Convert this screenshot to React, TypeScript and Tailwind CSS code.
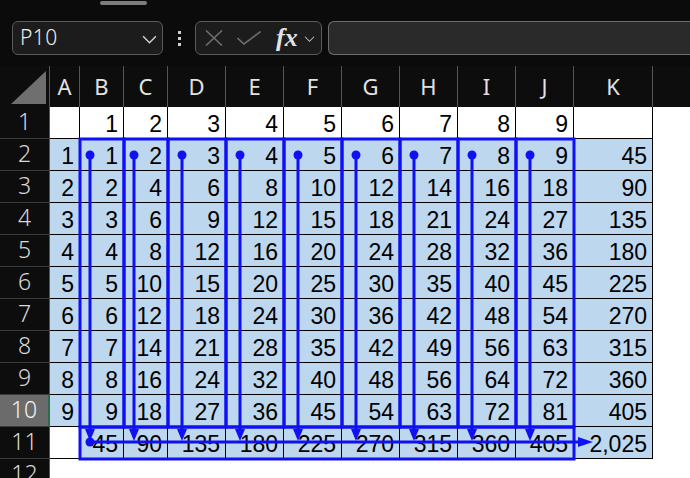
import React from 'react'

const COLS = [
  { key: 'A', w: 30 },
  { key: 'B', w: 44 },
  { key: 'C', w: 44 },
  { key: 'D', w: 58 },
  { key: 'E', w: 58 },
  { key: 'F', w: 58 },
  { key: 'G', w: 58 },
  { key: 'H', w: 58 },
  { key: 'I', w: 58 },
  { key: 'J', w: 58 },
  { key: 'K', w: 79 },
]

const ROW_H = 32
const HEAD_H = 41
const ROW_HEAD_W = 50

// left edge of each column in sheet coordinates
const colLeft: number[] = []
{
  let x = ROW_HEAD_W
  for (const c of COLS) {
    colLeft.push(x)
    x += c.w
  }
}

const fmt = (n: number) => n.toLocaleString('en-US')

function cellValue(r: number, c: number): string {
  // r: 1-based row, c: 0 = A ... 10 = K
  if (r === 1) return c >= 1 && c <= 9 ? String(c) : ''
  if (r >= 2 && r <= 10) {
    const n = r - 1
    if (c === 0) return String(n)
    if (c <= 9) return String(n * c)
    return fmt(n * 45)
  }
  if (r === 11) {
    if (c === 0) return ''
    if (c <= 9) return fmt(45 * c)
    return fmt(45 * 45)
  }
  return ''
}

function isFilled(r: number, c: number) {
  if (r >= 2 && r <= 10) return true
  if (r === 11 && c >= 1) return true
  return false
}

function Chevron({ className }: { className?: string }) {
  return (
    <svg viewBox="0 0 14 8" className={className} fill="none" stroke="currentColor" strokeWidth="1.4">
      <polyline points="1,1 7,7 13,1" />
    </svg>
  )
}

function FormulaBar() {
  return (
    <div className="h-[66px] flex flex-col">
      <div className="mt-[1px] ml-[100px] w-[47px] h-[4px] rounded-full bg-[#7d7d7d]" />
      <div className="mt-[16px] h-[34px] flex items-stretch pl-[12px]">
        {/* name box */}
        <div className="w-[151px] rounded-[6px] border border-[#5a5a5a] bg-[#1c1c1c] flex items-center justify-between pl-[7px] pr-[5px]">
          <span className="text-[21px] text-[#ececec] font-light tracking-[0.5px]" style={{ fontFamily: '"Noto Sans", sans-serif' }}>
            P10
          </span>
          <Chevron className="mt-[2px] w-[15px] h-[9px] text-[#cfcfcf]" />
        </div>
        <div className="w-[32px] flex flex-col items-center justify-center gap-[3px]">
          <span className="w-[3px] h-[3px] bg-[#d0d0d0]" />
          <span className="w-[3px] h-[3px] bg-[#d0d0d0]" />
          <span className="w-[3px] h-[3px] bg-[#d0d0d0]" />
        </div>
        {/* cancel / enter / insert function */}
        <div className="w-[127px] rounded-[6px] border border-[#5a5a5a] bg-[#1c1c1c] flex items-center pl-[9px]">
          <svg viewBox="0 0 18 16" className="w-[18px] h-[16px] text-[#6c6c6c]" fill="none" stroke="currentColor" strokeWidth="1.6">
            <line x1="1" y1="0.5" x2="17" y2="15.5" />
            <line x1="17" y1="0.5" x2="1" y2="15.5" />
          </svg>
          <svg viewBox="0 0 24 14" className="ml-[14px] w-[24px] h-[14px] text-[#6c6c6c]" fill="none" stroke="currentColor" strokeWidth="1.6">
            <polyline points="0.5,7 7,13 23.5,0.5" />
          </svg>
          <span
            className="ml-[15px] text-[26px] italic font-bold text-[#e2e2e2] leading-none"
            style={{ fontFamily: '"Liberation Serif", serif' }}
          >
            fx
          </span>
          <Chevron className="ml-[6px] mt-[2px] w-[11px] h-[6px] text-[#bdbdbd]" />
        </div>
        <div className="ml-[6px] flex-1 rounded-l-[6px] border border-r-0 border-[#6e6e6e] bg-[#2a2a2a]" />
      </div>
    </div>
  )
}

function Overlay() {
  const top = HEAD_H + ROW_H // row 2 top
  const mid = HEAD_H + ROW_H * 10 // row 10 bottom
  const bot = HEAD_H + ROW_H * 11 // row 11 bottom
  const blue = '#1010f4'
  const dotY = top + 16
  const tipY = mid + 14
  const hY = mid + 15
  const hEnd = colLeft[10] + 19
  return (
    <svg className="absolute left-0 top-0 pointer-events-none" width={690} height={412}>
      {COLS.slice(1, 10).map((c, i) => (
        <rect key={c.key} x={colLeft[i + 1]} y={top} width={c.w} height={mid - top} fill="none" stroke={blue} strokeWidth={3} />
      ))}
      <rect x={colLeft[1]} y={mid} width={colLeft[10] - colLeft[1]} height={bot - mid} fill="none" stroke={blue} strokeWidth={3} />
      {COLS.slice(1, 10).map((c, i) => {
        const x = colLeft[i + 1] + (c.w < 50 ? 10 : 14)
        return (
          <g key={c.key}>
            <circle cx={x} cy={dotY} r={4.5} fill={blue} />
            <line x1={x} y1={dotY} x2={x} y2={tipY - 10} stroke={blue} strokeWidth={3} />
            <polygon points={`${x - 5},${tipY - 12} ${x + 5},${tipY - 12} ${x},${tipY}`} fill={blue} />
          </g>
        )
      })}
      <circle cx={colLeft[1] + 10} cy={hY} r={4.5} fill={blue} />
      <line x1={colLeft[1] + 10} y1={hY} x2={hEnd - 12} y2={hY} stroke={blue} strokeWidth={3} />
      <polygon points={`${hEnd - 15},${hY - 5} ${hEnd - 15},${hY + 5} ${hEnd},${hY}`} fill={blue} />
    </svg>
  )
}

function Sheet() {
  const rows = Array.from({ length: 12 }, (_, i) => i + 1)
  return (
    <div className="relative">
      <div className="grid grid-cols-[50px_30px_44px_44px_58px_58px_58px_58px_58px_58px_58px_79px_1fr] grid-rows-[41px_repeat(12,32px)]">
        {/* column headers */}
        <div className="bg-[#0d0d0d] border-r border-[#555] flex items-end justify-end pr-[3px] pb-[3px]">
          <svg width="35" height="33" viewBox="0 0 35 33">
            <polygon points="35,0 35,33 0,33" fill="#6f6f6f" />
          </svg>
        </div>
        {COLS.map((c) => (
          <div
            key={c.key}
            className="bg-[#0d0d0d] border-r border-[#555] flex items-center justify-center text-[22px] text-[#e2e2e2]"
            style={{ fontFamily: '"Noto Sans", sans-serif' }}
          >
            {c.key}
          </div>
        ))}
        <div className="bg-[#0d0d0d]" />

        {rows.map((r) => (
          <React.Fragment key={r}>
            <div
              className={
                r === 10
                  ? 'bg-[#6b6b6b] border-b border-[#3a3a3a] border-r-2 border-r-[#2f6a4c] flex items-center justify-center pb-[3px] text-[23px] text-[#f2f2f2] font-light'
                  : 'bg-[#0d0d0d] border-b border-[#3a3a3a] border-r border-r-[#555] flex items-center justify-center pb-[3px] text-[23px] text-[#d8d8d8] font-light'
              }
              style={{ fontFamily: '"Noto Sans", sans-serif' }}
            >
              {r}
            </div>
            {COLS.map((c, ci) =>
              r <= 11 ? (
                <div
                  key={c.key}
                  className={`border-r border-b border-black flex items-end justify-end pr-[5px] pb-[2px] text-[23px] leading-none text-black ${
                    isFilled(r, ci) ? 'bg-[#bdd7ee]' : 'bg-white'
                  }`}
                  style={{ fontFamily: '"Liberation Sans", Arial, sans-serif' }}
                >
                  {cellValue(r, ci)}
                </div>
              ) : (
                <div key={c.key} className="bg-white" />
              )
            )}
            <div className="bg-white" />
          </React.Fragment>
        ))}
      </div>
      <Overlay />
    </div>
  )
}

export default function App() {
  return (
    <div className="w-[690px] h-[478px] overflow-hidden bg-[#0b0b0b]">
      <FormulaBar />
      <Sheet />
    </div>
  )
}
